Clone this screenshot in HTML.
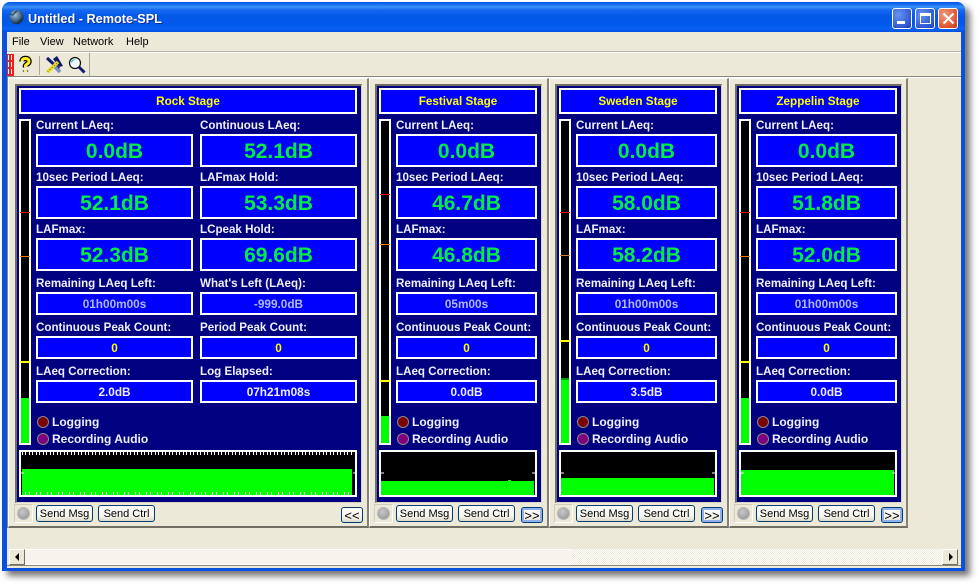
<!DOCTYPE html>
<html><head><meta charset="utf-8"><title>Untitled - Remote-SPL</title>
<style>
html,body{margin:0;padding:0;background:#fff;width:979px;height:586px;overflow:hidden}
body{position:relative;font-family:"Liberation Sans",sans-serif}
div,span,svg{position:absolute;box-sizing:border-box}
#win{left:2px;top:2px;width:963px;height:569px;background:#0a50e0;border-radius:8px 8px 0 0;box-shadow:5px 5px 7px rgba(0,0,0,.55)}
#tb{left:2px;top:2px;width:963px;height:30px;border-radius:8px 8px 0 0;background:linear-gradient(#0a55dc 0,#0e6af0 2px,#3c8ffa 5px,#1468f0 8px,#0458e8 14px,#0258ea 22px,#0a62f2 27px,#0050e0 30px)}
#tt{left:28px;top:12px;color:#fff;font-weight:bold;font-size:12.7px;line-height:15px;white-space:nowrap;text-shadow:1px 1px 0 #0a2f9c}
.wb{top:8px;width:20px;height:21px;border:1px solid #fff;border-radius:3px;background:radial-gradient(circle at 30% 30%,#6a93ee,#2a55d2 75%,#1c3fb8)}
#cl{left:7px;top:32px;width:954px;height:536px;background:#ece9d8}
.m{top:36px;font-size:11px;line-height:13px;color:#000;white-space:nowrap}
.hl{left:7px;width:954px;height:1px}
.vl{width:1px}
.pg{top:78px;height:450px;background:#ece9d8;border-left:1px solid #fff;border-top:1px solid #fff;border-right:2px solid #85836f;border-bottom:2px solid #716f64}
.n{top:84px;height:419px;background:#000080;border-top:2px solid #716f64;border-left:2px solid #716f64;border-right:1px solid #d8d5c4;border-bottom:1px solid #d8d5c4}
.p{top:0;left:0;width:0;height:0}
.t{left:3px;top:88px;height:26px;border:2px solid #fff;background:#0000ff;color:#ffff00;font-weight:bold;font-size:11.7px;line-height:24px;text-align:center}
.l{color:#f0f0ff;font-weight:bold;font-size:11.6px;line-height:14px;white-space:nowrap;margin-top:1px}
.b{border:2px solid #fff;background:#0000ff;text-align:center;font-weight:bold;white-space:nowrap}
.big{height:33px;color:#00ee40;font-size:21px;line-height:31px}
.sm{height:23px;font-size:11.8px;line-height:21px;color:#b0b8f0}
.y{color:#ffff00}.w{color:#f0f0ff}
.c1{left:20px}.c2{left:184px}
.wr{width:157px}.wn{width:141px}
.mt{left:3px;top:119px;width:12px;height:326px;border:2px solid #fff;background:#000}
.mk{left:-1px;width:10px;height:1px}
.led{left:21px;width:12px;height:12px;border-radius:50%;border:1px solid #8a8a8a}
.lt{left:36px;color:#f0f0ff;font-weight:bold;font-size:12px;line-height:14px;white-space:nowrap}
.ind{top:504px;width:19px;height:19px;border:1px solid #cfccbb;border-right-color:#fff;border-bottom-color:#fff;background:#ece9d8}
.ind div{left:2px;top:2px;width:13px;height:13px;border-radius:50%;background:radial-gradient(circle at 40% 35%,#c8c8c8,#a0a0a0 70%);border:1px solid #b8b8b8}
.btn{top:505px;height:17px;border:1px solid #003c74;border-radius:3px;background:linear-gradient(#fff,#f4f3ec 70%,#dcd8c8);font-size:11px;line-height:17px;text-align:center;color:#000;white-space:nowrap}
.nv{top:507px;width:22px;height:16px;border:1px solid #003c74;border-radius:3px;font-size:13px;line-height:16px;text-align:center;color:#000;background:linear-gradient(#fff,#f2f0e6 70%,#dcd8c8)}
.nv.on{box-shadow:inset 0 0 0 2px #8fb0ea}
</style></head><body>
<div id="win"></div>
<div id="tb"></div>
<svg style="left:8px;top:9px" width="17" height="17" viewBox="0 0 17 17"><defs><radialGradient id="g" cx=".4" cy=".35" r=".7"><stop offset="0" stop-color="#a8c4d8"/><stop offset=".55" stop-color="#456c8c"/><stop offset="1" stop-color="#0c2438"/></radialGradient></defs><circle cx="8.5" cy="8" r="7.2" fill="url(#g)"/><path d="M2 5q3 2 4 0t3-3M10 15q1-4 4-5" stroke="#1a3650" fill="none"/></svg>
<div id="tt">Untitled - Remote-SPL</div>
<div class="wb" style="left:892px"><div style="left:4px;top:12px;width:8px;height:3px;background:#fff"></div></div>
<div class="wb" style="left:915px"><div style="left:4px;top:4px;width:11px;height:11px;border:1px solid #fff;border-top-width:3px"></div></div>
<div class="wb" style="left:938px;background:radial-gradient(circle at 30% 30%,#f09a80,#e0552e 70%,#c03a1a)"><svg style="left:3px;top:3px" width="13" height="13"><path d="M1.5 1.5L11.5 11.5M11.5 1.5L1.5 11.5" stroke="#fff" stroke-width="2"/></svg></div>
<div id="cl"></div>
<div class="m" style="left:12px">File</div>
<div class="m" style="left:40px">View</div>
<div class="m" style="left:73px">Network</div>
<div class="m" style="left:126px">Help</div>
<div class="hl" style="top:51px;background:#b8b5a4"></div>
<div class="hl" style="top:52px;background:#fff"></div>
<svg style="left:7px;top:54px" width="7" height="22"><rect width="7" height="22" fill="#e82020"/><path d="M1.5 1V21M4.5 1V21" stroke="#fff" stroke-width="1" stroke-dasharray="5 2"/></svg>
<svg style="left:18px;top:55px" width="15" height="19" viewBox="0 0 15 19"><path d="M4 6.5Q4 3.5 7.5 3.5T11 6.5Q11 8 9 9.2T7.5 12M7.5 15.5V16.5" fill="none" stroke="#000" stroke-width="5.4"/><path d="M4 6.5Q4 3.5 7.5 3.5T11 6.5Q11 8 9 9.2T7.5 12M7.5 15.5V16.5" fill="none" stroke="#ffee20" stroke-width="3"/></svg>
<div class="vl" style="left:39px;top:56px;height:19px;background:#aca899"></div>
<svg style="left:45px;top:56px" width="19" height="18" viewBox="0 0 19 18"><path d="M2 2L14 13" stroke="#101870" stroke-width="3"/><path d="M8 3L12 0L18 10L14 11Z" fill="#10186c"/><path d="M10 11L15 16" stroke="#8090c0" stroke-width="3.5"/><path d="M2.5 16L13 6" stroke="#e8d820" stroke-width="3.6"/><path d="M2.5 16L13 6" stroke="#807010" stroke-width="1" stroke-dasharray="1 2"/></svg>
<svg style="left:68px;top:56px" width="18" height="18" viewBox="0 0 18 18"><circle cx="7" cy="7" r="5.5" fill="#f4f8fa" stroke="#101010" stroke-width="1.2"/><path d="M3.5 6.5Q4 4 6.5 3.5" stroke="#30c8d8" stroke-width="1.4" fill="none"/><path d="M11 11L16.5 16.5" stroke="#101c78" stroke-width="3"/></svg>
<div class="vl" style="left:89px;top:53px;height:23px;background:#aca899"></div>
<div class="hl" style="top:76px;background:#8a8878"></div>
<div class="hl" style="top:77px;background:#fff"></div>
<div class="vl" style="left:7px;top:77px;height:451px;background:#8a8878"></div>

<div class="pg" style="left:8px;width:361px"></div>
<div class="pg" style="left:369px;width:180px"></div>
<div class="pg" style="left:549px;width:180px"></div>
<div class="pg" style="left:729px;width:179px"></div>

<!-- Rock -->
<div class="n" style="left:15px;width:347px"></div>
<div class="p" style="left:16px">
<div class="t" style="width:338px">Rock Stage</div>
<div class="mt"><div style="left:0;top:277px;width:8px;height:45px;background:#00ff00"></div><div class="mk" style="top:91px;background:#ff0000"></div><div class="mk" style="top:135px;background:#ff8000"></div><div class="mk" style="top:240px;height:2px;background:#ffff00"></div></div>
<div class="l c1" style="top:118px">Current LAeq:</div><div class="b big c1 wr" style="top:134px">0.0dB</div>
<div class="l c2" style="top:118px">Continuous LAeq:</div><div class="b big c2 wr" style="top:134px">52.1dB</div>
<div class="l c1" style="top:170px">10sec Period LAeq:</div><div class="b big c1 wr" style="top:186px">52.1dB</div>
<div class="l c2" style="top:170px">LAFmax Hold:</div><div class="b big c2 wr" style="top:186px">53.3dB</div>
<div class="l c1" style="top:222px">LAFmax:</div><div class="b big c1 wr" style="top:238px">52.3dB</div>
<div class="l c2" style="top:222px">LCpeak Hold:</div><div class="b big c2 wr" style="top:238px">69.6dB</div>
<div class="l c1" style="top:276px">Remaining LAeq Left:</div><div class="b sm c1 wr" style="top:292px">01h00m00s</div>
<div class="l c2" style="top:276px">What's Left (LAeq):</div><div class="b sm c2 wr" style="top:292px">-999.0dB</div>
<div class="l c1" style="top:320px">Continuous Peak Count:</div><div class="b sm y c1 wr" style="top:336px">0</div>
<div class="l c2" style="top:320px">Period Peak Count:</div><div class="b sm y c2 wr" style="top:336px">0</div>
<div class="l c1" style="top:364px">LAeq Correction:</div><div class="b sm w c1 wr" style="top:380px">2.0dB</div>
<div class="l c2" style="top:364px">Log Elapsed:</div><div class="b sm w c2 wr" style="top:380px">07h21m08s</div>
<div class="led" style="top:416px;background:#7c0000"></div><div class="lt" style="top:415px">Logging</div>
<div class="led" style="top:433px;background:#800080"></div><div class="lt" style="top:432px">Recording Audio</div>
<svg style="left:3px;top:450px" width="338" height="47" shape-rendering="crispEdges"><rect x="1" y="1" width="336" height="45" fill="#000" stroke="#fff" stroke-width="2"/><rect x="3" y="19" width="330" height="26" fill="#00ff00"/><path d="M2 23H5M334 23H336" stroke="#fff"/><path d="M3 3.5H333" stroke="#fff" stroke-width="3" stroke-dasharray="1 2 1 3"/><path d="M6 43.5H333" stroke="#fff" stroke-width="3" stroke-dasharray="1 3 1 6"/></svg>
<div class="ind" style="left:-2px"><div></div></div>
<div class="btn" style="left:20px;width:57px">Send Msg</div>
<div class="btn" style="left:82px;width:57px">Send Ctrl</div>
<div class="nv" style="left:325px">&lt;&lt;</div>
</div>

<!-- Festival -->
<div class="n" style="left:375px;width:167px"></div>
<div class="p" style="left:376px">
<div class="t" style="width:158px">Festival Stage</div>
<div class="mt"><div style="left:0;top:295px;width:8px;height:27px;background:#00ff00"></div><div class="mk" style="top:73px;background:#ff0000"></div><div class="mk" style="top:123px;background:#ff8000"></div><div class="mk" style="top:259px;height:2px;background:#ffff00"></div></div>
<div class="l c1" style="top:118px">Current LAeq:</div><div class="b big c1 wn" style="top:134px">0.0dB</div>
<div class="l c1" style="top:170px">10sec Period LAeq:</div><div class="b big c1 wn" style="top:186px">46.7dB</div>
<div class="l c1" style="top:222px">LAFmax:</div><div class="b big c1 wn" style="top:238px">46.8dB</div>
<div class="l c1" style="top:276px">Remaining LAeq Left:</div><div class="b sm c1 wn" style="top:292px">05m00s</div>
<div class="l c1" style="top:320px">Continuous Peak Count:</div><div class="b sm y c1 wn" style="top:336px">0</div>
<div class="l c1" style="top:364px">LAeq Correction:</div><div class="b sm w c1 wn" style="top:380px">0.0dB</div>
<div class="led" style="top:416px;background:#7c0000"></div><div class="lt" style="top:415px">Logging</div>
<div class="led" style="top:433px;background:#800080"></div><div class="lt" style="top:432px">Recording Audio</div>
<svg style="left:3px;top:450px" width="158" height="47" shape-rendering="crispEdges"><rect x="1" y="1" width="156" height="45" fill="#000" stroke="#fff" stroke-width="2"/><rect x="2" y="31" width="153" height="14" fill="#00ff00"/><rect x="129" y="30" width="3" height="1" fill="#00ff00"/><path d="M2 23H5M153 23H156" stroke="#fff"/></svg>
<div class="ind" style="left:-2px"><div></div></div>
<div class="btn" style="left:20px;width:57px">Send Msg</div>
<div class="btn" style="left:82px;width:57px">Send Ctrl</div>
<div class="nv on" style="left:145px">&gt;&gt;</div>
</div>

<!-- Sweden -->
<div class="n" style="left:555px;width:167px"></div>
<div class="p" style="left:556px">
<div class="t" style="width:158px">Sweden Stage</div>
<div class="mt"><div style="left:0;top:257px;width:8px;height:2px;background:#00a000"></div><div style="left:0;top:259px;width:8px;height:63px;background:#00ff00"></div><div class="mk" style="top:91px;background:#ff0000"></div><div class="mk" style="top:134px;background:#d08030"></div><div class="mk" style="top:219px;height:2px;background:#ffff00"></div></div>
<div class="l c1" style="top:118px">Current LAeq:</div><div class="b big c1 wn" style="top:134px">0.0dB</div>
<div class="l c1" style="top:170px">10sec Period LAeq:</div><div class="b big c1 wn" style="top:186px">58.0dB</div>
<div class="l c1" style="top:222px">LAFmax:</div><div class="b big c1 wn" style="top:238px">58.2dB</div>
<div class="l c1" style="top:276px">Remaining LAeq Left:</div><div class="b sm c1 wn" style="top:292px">01h00m00s</div>
<div class="l c1" style="top:320px">Continuous Peak Count:</div><div class="b sm y c1 wn" style="top:336px">0</div>
<div class="l c1" style="top:364px">LAeq Correction:</div><div class="b sm w c1 wn" style="top:380px">3.5dB</div>
<div class="led" style="top:416px;background:#7c0000"></div><div class="lt" style="top:415px">Logging</div>
<div class="led" style="top:433px;background:#800080"></div><div class="lt" style="top:432px">Recording Audio</div>
<svg style="left:3px;top:450px" width="158" height="47" shape-rendering="crispEdges"><rect x="1" y="1" width="156" height="45" fill="#000" stroke="#fff" stroke-width="2"/><rect x="2" y="28" width="153" height="17" fill="#00ff00"/><path d="M2 23H5M153 23H156" stroke="#fff"/></svg>
<div class="ind" style="left:-2px"><div></div></div>
<div class="btn" style="left:20px;width:57px">Send Msg</div>
<div class="btn" style="left:82px;width:57px">Send Ctrl</div>
<div class="nv on" style="left:145px">&gt;&gt;</div>
</div>

<!-- Zeppelin -->
<div class="n" style="left:735px;width:167px"></div>
<div class="p" style="left:736px">
<div class="t" style="width:158px">Zeppelin Stage</div>
<div class="mt"><div style="left:0;top:277px;width:8px;height:45px;background:#00ff00"></div><div class="mk" style="top:91px;background:#ff0000"></div><div class="mk" style="top:135px;background:#ff8000"></div><div class="mk" style="top:240px;height:2px;background:#ffff00"></div></div>
<div class="l c1" style="top:118px">Current LAeq:</div><div class="b big c1 wn" style="top:134px">0.0dB</div>
<div class="l c1" style="top:170px">10sec Period LAeq:</div><div class="b big c1 wn" style="top:186px">51.8dB</div>
<div class="l c1" style="top:222px">LAFmax:</div><div class="b big c1 wn" style="top:238px">52.0dB</div>
<div class="l c1" style="top:276px">Remaining LAeq Left:</div><div class="b sm c1 wn" style="top:292px">01h00m00s</div>
<div class="l c1" style="top:320px">Continuous Peak Count:</div><div class="b sm y c1 wn" style="top:336px">0</div>
<div class="l c1" style="top:364px">LAeq Correction:</div><div class="b sm w c1 wn" style="top:380px">0.0dB</div>
<div class="led" style="top:416px;background:#7c0000"></div><div class="lt" style="top:415px">Logging</div>
<div class="led" style="top:433px;background:#800080"></div><div class="lt" style="top:432px">Recording Audio</div>
<svg style="left:3px;top:450px" width="158" height="47" shape-rendering="crispEdges"><rect x="1" y="1" width="156" height="45" fill="#000" stroke="#fff" stroke-width="2"/><rect x="2" y="20" width="153" height="25" fill="#00ff00"/><path d="M2 23H5M153 23H156" stroke="#fff"/></svg>
<div class="ind" style="left:-2px"><div></div></div>
<div class="btn" style="left:20px;width:57px">Send Msg</div>
<div class="btn" style="left:82px;width:57px">Send Ctrl</div>
<div class="nv on" style="left:145px">&gt;&gt;</div>
</div>

<!-- Scrollbar -->
<div style="left:25px;top:549px;width:546px;height:16px;background:#f6f4ec;border-top:1px solid #fff;border-bottom:1px solid #fff"></div>
<div style="left:571px;top:549px;width:372px;height:16px;background:repeating-conic-gradient(#fff 0 25%,#ece9d8 0 50%) 0 0/2px 2px"></div>
<div style="left:9px;top:549px;width:16px;height:16px;background:#ece9d8;border-right:1px solid #716f64;border-bottom:1px solid #716f64;border-top:1px solid #fff;border-left:1px solid #fff"><svg style="left:3px;top:3px" width="8" height="9"><path d="M6 0V8L2 4Z" fill="#000"/></svg></div>
<div style="left:942px;top:549px;width:16px;height:16px;background:#ece9d8;border-right:1px solid #716f64;border-bottom:1px solid #716f64;border-top:1px solid #fff;border-left:1px solid #fff"><svg style="left:4px;top:3px" width="8" height="9"><path d="M2 0V8L6 4Z" fill="#000"/></svg></div>
<div class="hl" style="top:565px;background:#8a8878"></div>
<div class="hl" style="top:566px;background:#ece9d8"></div>
</body></html>
